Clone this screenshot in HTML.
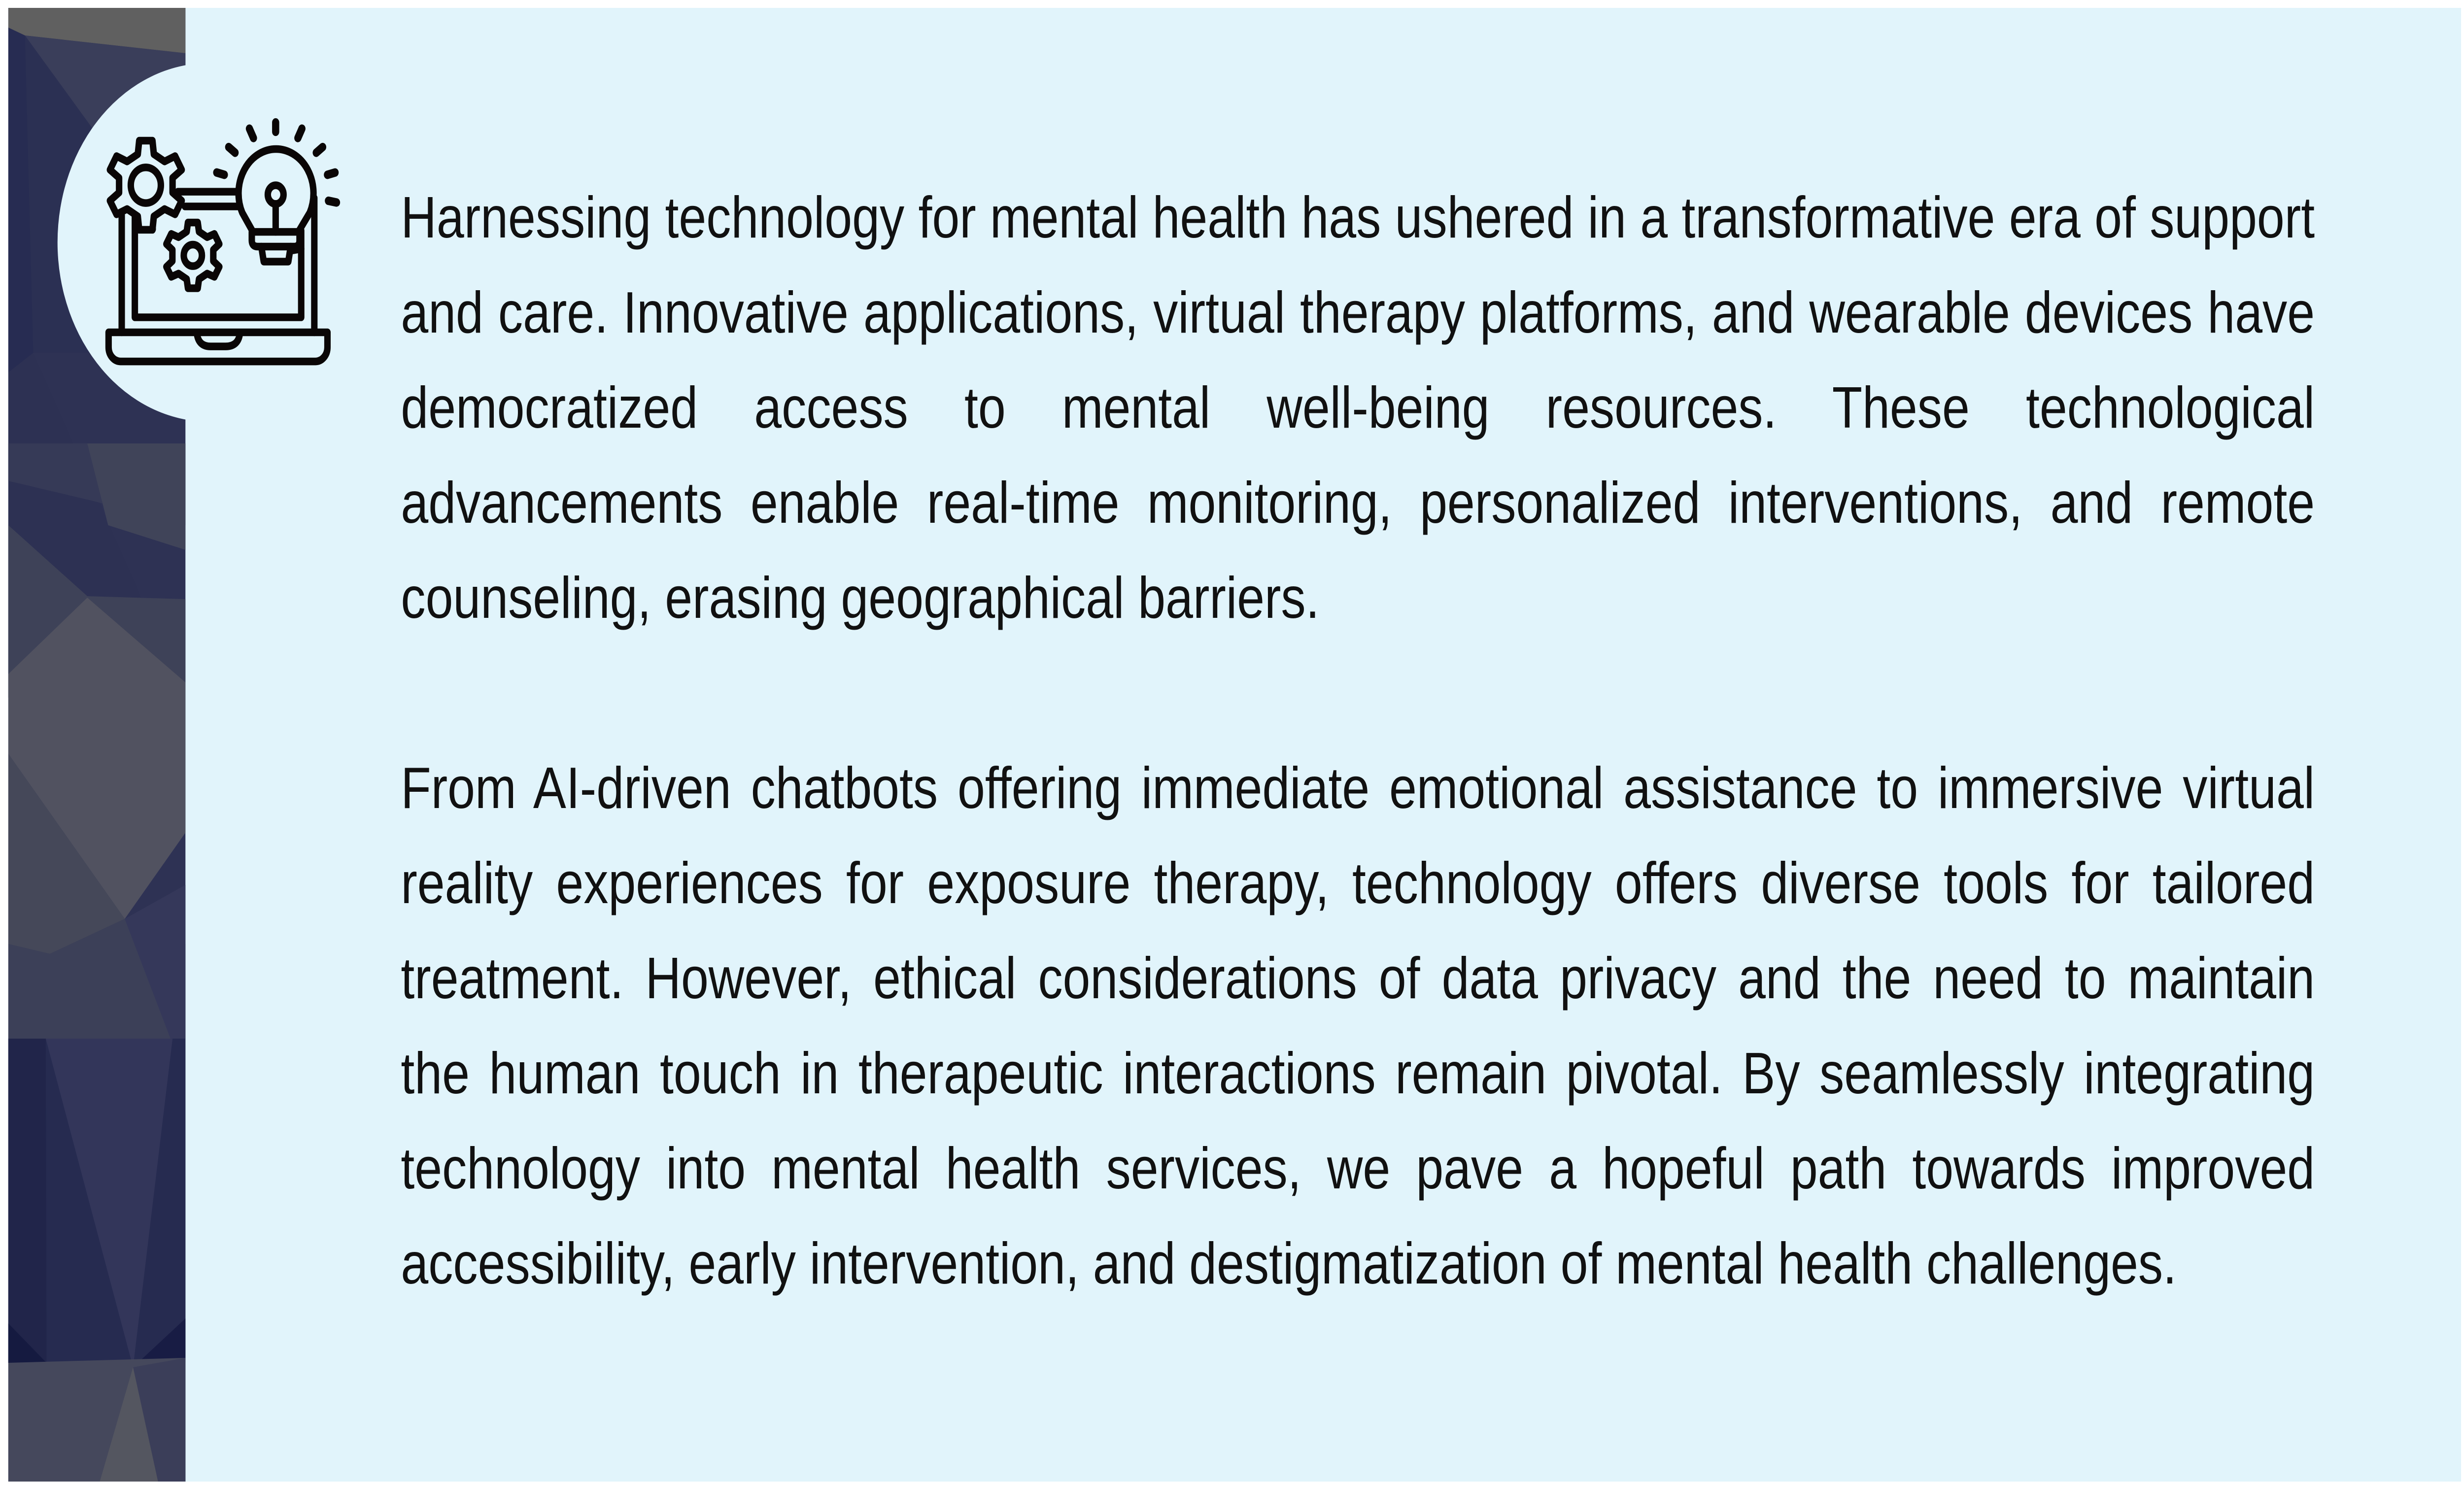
<!DOCTYPE html>
<html><head><meta charset="utf-8"><style>
html,body{margin:0;padding:0;width:100%;height:100%;overflow:hidden;background:#fff;}
#root{display:block;width:100vw;height:100vh;}
.tx{font-family:"Liberation Sans",sans-serif;font-size:119px;line-height:193px;color:#111;width:4603px;}
.j{text-align:justify;text-align-last:justify;height:193px;overflow:hidden;white-space:normal;}
.l{text-align:left;height:193px;white-space:nowrap;}
.gap{height:193px;}
</style></head><body>
<svg id="root" viewBox="0 0 5926 3014" preserveAspectRatio="none">
<rect x="0" y="0" width="5926" height="3014" fill="#fff"/>
<rect x="20" y="16" width="5899" height="2991" fill="#E1F4FB"/>
<g transform="translate(20,16)">
<rect x="0" y="0" width="426" height="2991" fill="#2e3254"/>
<polygon points="0,0 426,0 426,92 40,56 0,40" fill="#606060"/>
<polygon points="40,56 426,92 426,500 250,300" fill="#3a3e5a"/>
<polygon points="0,40 40,56 60,700 0,740" fill="#272c52"/>
<polygon points="40,56 250,300 426,500 426,700 60,700" fill="#2b3053"/>
<polygon points="0,740 60,700 400,1350 0,1400" fill="#2d3153"/>
<polygon points="0,884 426,884 426,1050 200,1000 0,960" fill="#363a57"/>
<polygon points="190,884 426,884 426,1100 240,1050" fill="#404459"/>
<polygon points="0,1050 190,1194 426,1200 426,1369 0,1350" fill="#3e4258"/>
<polygon points="0,1352 190,1197 426,1369 426,1674 280,1849 0,1514" fill="#515260"/>
<polygon points="0,1514 280,1849 100,1920 0,1900" fill="#454859"/>
<polygon points="0,1900 100,1920 280,1849 426,1900 426,2092 0,2092" fill="#3c4058"/>
<polygon points="280,1849 426,1780 426,2092 390,2092" fill="#35385a"/>
<polygon points="0,2092 426,2092 426,2750 0,2750" fill="#262b50"/>
<polygon points="0,2092 90,2092 92,2750 0,2750" fill="#21254a"/>
<polygon points="90,2092 395,2092 300,2759" fill="#33365a"/>
<polygon points="0,2670 92,2750 0,2750" fill="#151a40"/>
<polygon points="300,2759 426,2660 426,2740" fill="#181c44"/>
<polygon points="0,2750 426,2740 426,2991 0,2991" fill="#45485c"/>
<polygon points="300,2759 426,2740 426,2991 360,2991" fill="#3b3e59"/>
<polygon points="300,2759 360,2991 220,2991" fill="#545660"/>
</g>
<g transform="scale(0.574)">
<circle cx="875" cy="857" r="634" fill="#E1F4FB"/>
<g fill="none" stroke="#0a0606" stroke-width="27" stroke-linecap="round" stroke-linejoin="round">
<path d="M455,1175 H1372 V1228 a50,50 0 0 1 -50,50 H505 a50,50 0 0 1 -50,-50 Z"/>
<path d="M825,1180 Q832,1225 882,1225 H945 Q998,1225 1005,1180"/>
<path d="M510,760 V1175 M1317,700 V1175"/>
<path d="M745,678 H990 M775,730 H995"/>
<path d="M565,760 V1122 H1262 V815 M565,810 H640"/>
<path d="M1228,885 L1262,880"/>
<polygon points="577.4,545.1 583.2,497.4 638.8,497.4 644.6,545.1 689.4,570.9 733.6,552.1 761.4,600.3 723,629.1 723,680.9 761.4,709.7 733.6,757.9 689.4,739.1 644.6,764.9 638.8,812.6 583.2,812.6 577.4,764.9 532.6,739.1 488.4,757.9 460.6,709.7 499,680.9 499,629.1 460.6,600.3 488.4,552.1 532.6,570.9" fill="#E1F4FB"/>
<circle cx="611" cy="655" r="63"/>
<polygon points="782.3,818.9 787.5,786.8 828.5,786.8 833.7,818.9 868,838.7 898.4,827.1 918.9,862.7 893.7,883.2 893.7,922.8 918.9,943.3 898.4,978.9 868,967.3 833.7,987.1 828.5,1019.2 787.5,1019.2 782.3,987.1 748,967.3 717.6,978.9 697.1,943.3 722.3,922.8 722.3,883.2 697.1,862.7 717.6,827.1 748,838.7" fill="#E1F4FB"/>
<circle cx="808" cy="903" r="38"/>
<path d="M1060,820 L1015,752 A157,157 0 1 1 1298,752 L1250,820" fill="#E1F4FB"/>
<path d="M1055,820 V850 Q1055,872 1080,872 H1232 Q1255,872 1255,850 V820 Z"/>
<path d="M1095,872 L1105,925 H1208 L1218,872"/>
<circle cx="1155" cy="688" r="33"/>
<path d="M1155,721 V820"/>
<path d="M1045,455 L1062,488 M1155,433 V466 M1248,488 L1265,455 M958,520 L985,540 M1325,540 L1352,520 M908,610 L940,618 M1372,618 L1404,610 M1376,710 L1410,716" stroke-width="30"/>
</g>
</g>
<foreignObject x="964" y="345" width="4700" height="2400">
<div xmlns="http://www.w3.org/1999/xhtml" class="tx">
<div class="j">Harnessing technology for mental health has ushered in a transformative era of support</div>
<div class="j">and care. Innovative applications, virtual therapy platforms, and wearable devices have</div>
<div class="j">democratized access to mental well-being resources. These technological</div>
<div class="j">advancements enable real-time monitoring, personalized interventions, and remote</div>
<div class="l">counseling, erasing geographical barriers.</div>
<div class="gap"></div>
<div class="j">From AI-driven chatbots offering immediate emotional assistance to immersive virtual</div>
<div class="j">reality experiences for exposure therapy, technology offers diverse tools for tailored</div>
<div class="j">treatment. However, ethical considerations of data privacy and the need to maintain</div>
<div class="j">the human touch in therapeutic interactions remain pivotal. By seamlessly integrating</div>
<div class="j">technology into mental health services, we pave a hopeful path towards improved</div>
<div class="l">accessibility, early intervention, and destigmatization of mental health challenges.</div>
</div>
</foreignObject>
</svg>
</body></html>
